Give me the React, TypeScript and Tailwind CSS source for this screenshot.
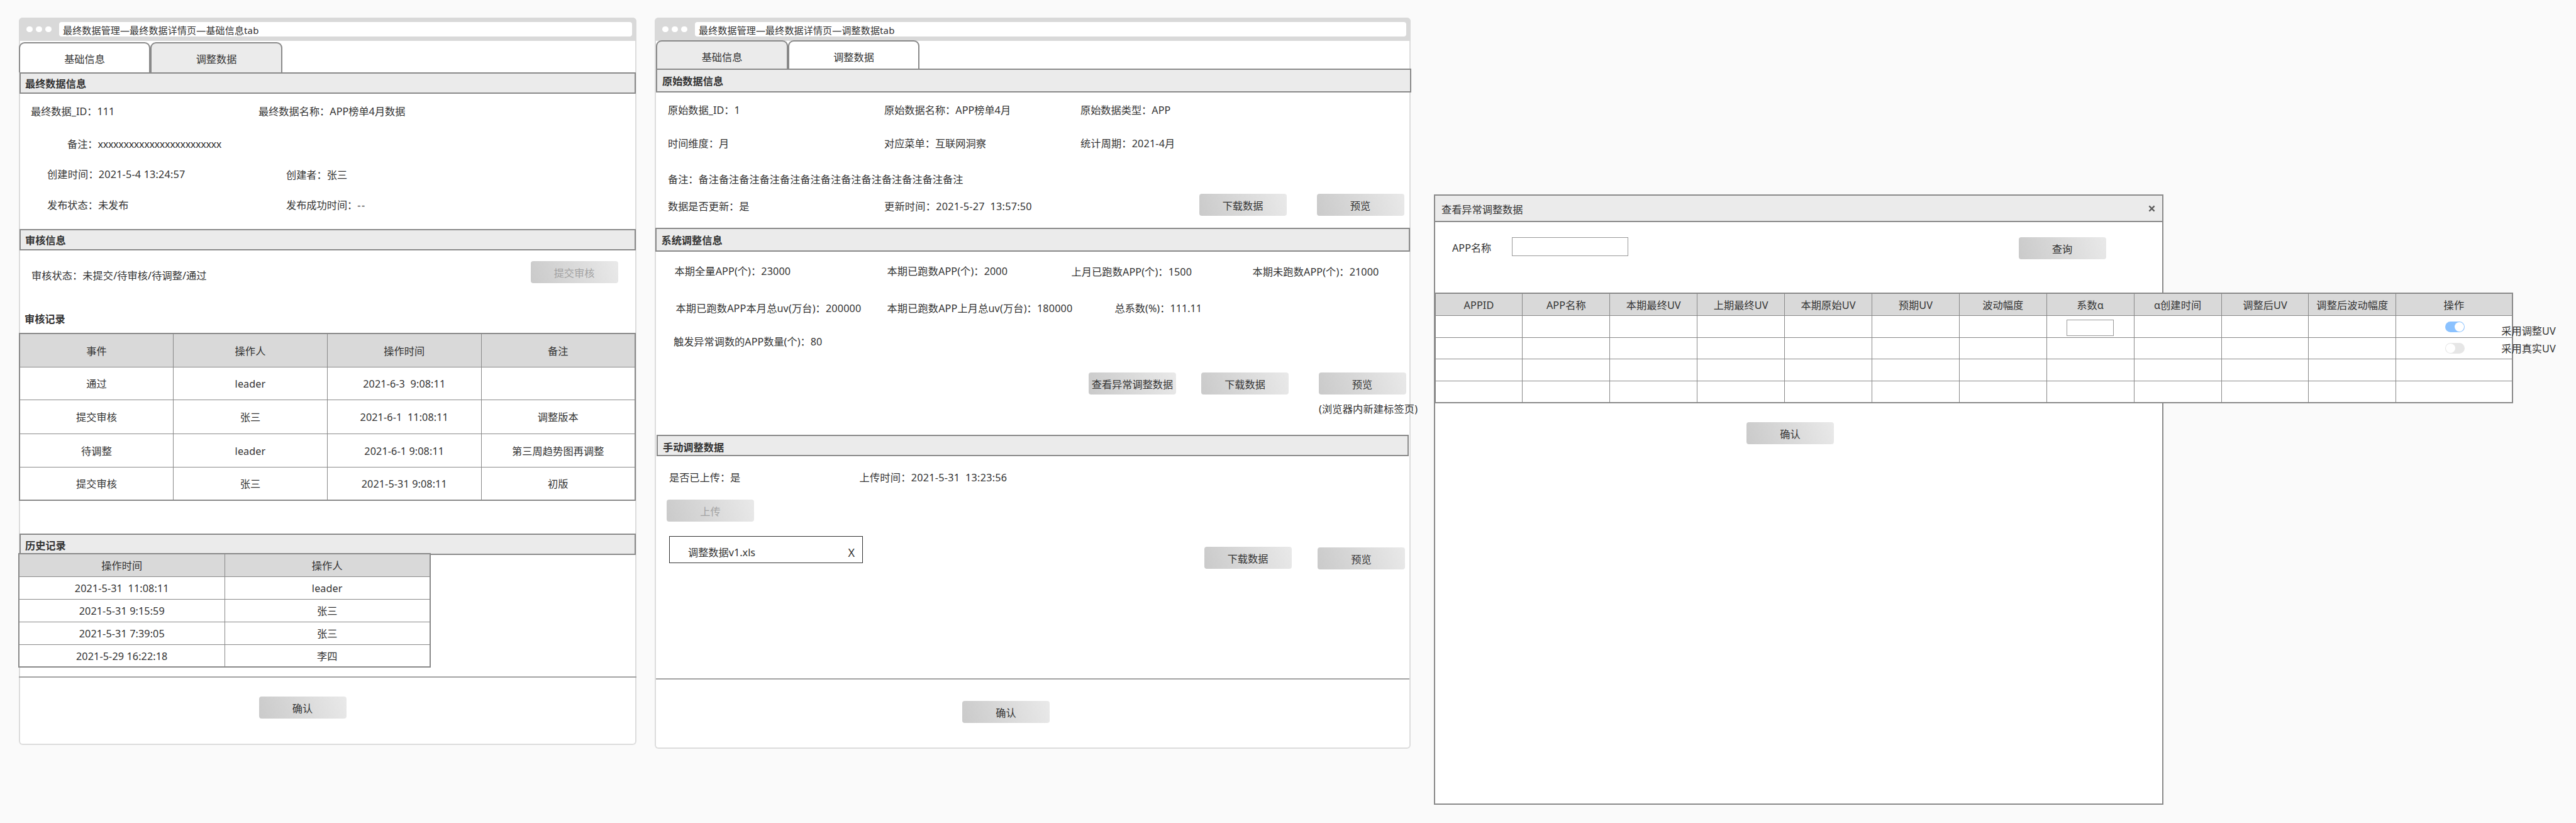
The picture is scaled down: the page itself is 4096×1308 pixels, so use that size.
import type { ReactNode } from "react";

type Kids = { children?: ReactNode; className?: string };

const Text = ({ children, className = "" }: Kids) => (
  <span className={`block whitespace-pre leading-[20px] ${className}`}>{children}</span>
);

const Row = ({ children, className = "" }: Kids) => (
  <div className={`grid shrink-0 items-start ${className}`}>{children}</div>
);

const Button = ({ children, className = "", disabled = false }: Kids & { disabled?: boolean }) => (
  <button
    className={`block w-[139px] shrink-0 rounded-[4px] bg-[linear-gradient(72deg,#cacaca,#e9e9e9)] p-0 pt-[3px] text-center leading-[20px] whitespace-nowrap ${
      disabled ? "text-[#a3a3a3]" : "text-[#333333]"
    } ${className}`}
  >
    {children}
  </button>
);

const SectionHeader = ({ children, className = "" }: Kids) => (
  <h2
    className={`relative flex shrink-0 items-center border-2 border-[#898989] bg-[#ebebeb] pl-[7px] pt-[2px] font-bold leading-[20px] ${className}`}
  >
    {children}
  </h2>
);

const BrowserBar = ({ title }: { title: string }) => (
  <div className="flex h-[37px] shrink-0 items-center rounded-t-[6px] bg-[#d9d9d9] pl-[12px] pr-[7px]">
    <div className="flex w-[52px] gap-[5.5px]">
      <i className="size-[9.5px] rounded-full bg-white" />
      <i className="size-[9.5px] rounded-full bg-white" />
      <i className="size-[9.5px] rounded-full bg-white" />
    </div>
    <div className="flex h-[23px] flex-1 items-center rounded-[4px] bg-white pl-[6px] pt-[3px] text-[15px] leading-[20px] tracking-[0.16px]">
      {title}
    </div>
  </div>
);

const Tab = ({ children, className = "" }: Kids) => (
  <div
    className={`flex items-center justify-center rounded-t-[9px] border-2 border-b-0 border-[#898989] pt-[4px] leading-[20px] ${className}`}
  >
    {children}
  </div>
);

const DataTable = ({
  cols,
  rows,
  heights,
  className = "",
}: {
  cols: string;
  rows: ReactNode[][];
  heights: string[];
  className?: string;
}) => (
  <div className={`relative flex shrink-0 flex-col border-2 border-[#898989] bg-white ${className}`}>
    {rows.map((row, r) => (
      <div
        key={r}
        className={`grid border-[#898989] ${cols} ${heights[r]} ${r === 0 ? "bg-[#d9d9d9]" : ""} ${
          r < rows.length - 1 ? "border-b" : ""
        }`}
      >
        {row.map((cell, c) => (
          <div
            key={c}
            className={`relative flex items-center justify-center whitespace-pre border-[#898989] leading-[20px] ${
              c < row.length - 1 ? "border-r" : ""
            }`}
          >
            {typeof cell === "string" ? <span className="pt-[1px] tracking-[0.1px]">{cell}</span> : cell}
          </div>
        ))}
      </div>
    ))}
  </div>
);

const auditRows = [
  ["事件", "操作人", "操作时间", "备注"],
  ["通过", "leader", "2021-6-3  9:08:11", ""],
  ["提交审核", "张三", "2021-6-1  11:08:11", "调整版本"],
  ["待调整", "leader", "2021-6-1 9:08:11", "第三周趋势图再调整"],
  ["提交审核", "张三", "2021-5-31 9:08:11", "初版"],
];

const historyRows = [
  ["操作时间", "操作人"],
  ["2021-5-31  11:08:11", "leader"],
  ["2021-5-31 9:15:59", "张三"],
  ["2021-5-31 7:39:05", "张三"],
  ["2021-5-29 16:22:18", "李四"],
];

const Toggle = ({ on, className = "" }: { on: boolean; className?: string }) => (
  <div
    className={`absolute left-[78px] flex h-[17px] w-[31px] items-center rounded-full p-[1px] ${
      on ? "justify-end bg-[#8bc2ff]" : "bg-[#e6e6e6]"
    } ${className}`}
  >
    <i className="size-[15px] rounded-full bg-white" />
  </div>
);

const empty = (n: number): ReactNode[] => Array.from({ length: n }, () => "");

const uvRows: ReactNode[][] = [
  [
    "APPID",
    "APP名称",
    "本期最终UV",
    "上期最终UV",
    "本期原始UV",
    "预期UV",
    "波动幅度",
    "系数α",
    "α创建时间",
    "调整后UV",
    "调整后波动幅度",
    "操作",
  ],
  [
    ...empty(7),
    <div key="coef" className="mt-[6px] h-[26px] w-[75px] self-start border border-[#999999] bg-white" />,
    ...empty(3),
    <div key="on">
      <Toggle on className="top-[9px]" />
      <Text className="absolute left-[167px] top-[14px]">采用调整UV</Text>
    </div>,
  ],
  [
    ...empty(11),
    <div key="off">
      <Toggle on={false} className="top-[8px]" />
      <Text className="absolute left-[167px] top-[7px]">采用真实UV</Text>
    </div>,
  ],
  empty(12),
  empty(12),
];

const BasicInfoPanel = () => (
  <section className="mt-[28px] flex h-[1156px] w-[982px] shrink-0 flex-col rounded-[6px] bg-white shadow-[inset_0_0_0_2px_#dcdcdc]">
    <BrowserBar title="最终数据管理—最终数据详情页—基础信息tab" />
    <div className="mt-[2px] flex h-[48px] shrink-0">
      <Tab className="w-[209px] bg-white">基础信息</Tab>
      <Tab className="w-[210px] bg-[#ebebeb]">调整数据</Tab>
    </div>
    <SectionHeader className="ml-[1px] h-[34px] w-[980px]">最终数据信息</SectionHeader>
    <div className="flex h-[215px] shrink-0 flex-col">
      <Row className="mt-[18px] grid-cols-[362px_auto] pl-[19px]">
        <Text>最终数据_ID：111</Text>
        <Text>最终数据名称：APP榜单4月数据</Text>
      </Row>
      <Row className="mt-[32px] pl-[77px]">
        <Text>
          备注：<span className="tracking-[-0.38px]">xxxxxxxxxxxxxxxxxxxxxxxx</span>
        </Text>
      </Row>
      <Row className="mt-[28px] grid-cols-[380px_auto] pl-[45px]">
        <Text className="tracking-[0.18px]">创建时间：2021-5-4 13:24:57</Text>
        <Text className="pt-[1px]">创建者：张三</Text>
      </Row>
      <Row className="mt-[28px] grid-cols-[380px_auto] pl-[45px]">
        <Text>发布状态：未发布</Text>
        <Text>
          发布成功时间：<span className="tracking-[1.6px]">--</span>
        </Text>
      </Row>
    </div>
    <SectionHeader className="ml-[1px] h-[34px] w-[980px]">审核信息</SectionHeader>
    <div className="flex h-[131px] shrink-0 flex-col">
      <Row className="mt-[17px] grid-cols-[793.5px_auto] pl-[20px]">
        <Text className="pt-[13px] tracking-[0.08px]">审核状态：未提交/待审核/待调整/通过</Text>
        <Button disabled className="h-[35px]">提交审核</Button>
      </Row>
      <Text className="mt-[47px] pl-[9px] font-bold">审核记录</Text>
    </div>
    <DataTable
      className="h-[267px] w-[981px]"
      cols="grid-cols-[244px_245px_244.5px_1fr]"
      rows={auditRows}
      heights={["h-[53px]", "h-[52px]", "h-[54px]", "h-[53px]", "h-[51px]"]}
    />
    <SectionHeader className="ml-[1px] mt-[52px] h-[34px] w-[980px] pt-[4px]">历史记录</SectionHeader>
    <DataTable
      className="-ml-[1px] -mt-[3px] h-[182px] w-[656px]"
      cols="grid-cols-[326.5px_1fr]"
      rows={historyRows}
      heights={["h-[36px]", "h-[36px]", "h-[36px]", "h-[36px]", "h-[34px]"]}
    />
    <div className="mt-[14px] h-[2px] w-[982px] shrink-0 bg-[#a3a3a3]" />
    <Button className="ml-[381.5px] mt-[30px] h-[35px]">确认</Button>
  </section>
);

const AdjustDataPanel = () => (
  <section className="ml-[29px] mt-[28px] flex h-[1162px] w-[1202px] shrink-0 flex-col rounded-[6px] bg-white shadow-[inset_0_0_0_2px_#dcdcdc]">
    <BrowserBar title="最终数据管理—最终数据详情页—调整数据tab" />
    <div className="relative -mt-[1px] ml-[2px] flex h-[45px] shrink-0">
      <Tab className="w-[210px] bg-[#ebebeb] pt-[7px]">基础信息</Tab>
      <Tab className="w-[209px] bg-white pt-[7px]">调整数据</Tab>
    </div>
    <SectionHeader className="ml-[2px] h-[38px] w-[1200.5px] pl-[8px] pt-[0px]">原始数据信息</SectionHeader>
    <div className="flex h-[215px] shrink-0 flex-col">
      <Row className="mt-[18px] grid-cols-[344px_312px_auto] pl-[21px]">
        <Text>原始数据_ID：1</Text>
        <Text>原始数据名称：APP榜单4月</Text>
        <Text>原始数据类型：APP</Text>
      </Row>
      <Row className="mt-[33px] grid-cols-[344px_312px_auto] pl-[21px]">
        <Text>时间维度：月</Text>
        <Text>对应菜单：互联网洞察</Text>
        <Text className="tracking-[0.15px]">统计周期：2021-4月</Text>
      </Row>
      <Row className="mt-[37px] pl-[21px]">
        <Text>备注：备注备注备注备注备注备注备注备注备注备注备注备注备注</Text>
      </Row>
      <Row className="mt-[13px] grid-cols-[344px_500.5px_187px_auto] pl-[21px]">
        <Text className="pt-[10px]">数据是否更新：是</Text>
        <Text className="pt-[10px] tracking-[0.25px]">更新时间：2021-5-27  13:57:50</Text>
        <Button className="h-[35px]">下载数据</Button>
        <Button className="h-[35px]">预览</Button>
      </Row>
    </div>
    <SectionHeader className="ml-[0.5px] h-[38px] w-[1200px] pl-[8px]">系统调整信息</SectionHeader>
    <div className="flex h-[291px] shrink-0 flex-col">
      <Row className="mt-[21px] grid-cols-[338px_293px_288px_auto] pl-[31.5px]">
        <Text className="tracking-[0.1px]">本期全量APP(个)：23000</Text>
        <Text className="tracking-[0.1px]">本期已跑数APP(个)：2000</Text>
        <Text className="pt-[1px] tracking-[0.1px]">上月已跑数APP(个)：1500</Text>
        <Text className="pt-[1px] tracking-[0.1px]">本期未跑数APP(个)：21000</Text>
      </Row>
      <Row className="mt-[38px] grid-cols-[336px_362px_auto] pl-[33.5px]">
        <Text className="tracking-[0.14px]">本期已跑数APP本月总uv(万台)：200000</Text>
        <Text className="tracking-[0.14px]">本期已跑数APP上月总uv(万台)：180000</Text>
        <Text>总系数(%)：111.11</Text>
      </Row>
      <Row className="mt-[33px] pl-[30px]">
        <Text>触发异常调数的APP数量(个)：80</Text>
      </Row>
      <Row className="mt-[39px] grid-cols-[179px_186.5px_auto] pl-[690px]">
        <Button className="h-[35px]">查看异常调整数据</Button>
        <Button className="h-[35px]">下载数据</Button>
        <Button className="h-[35px]">预览</Button>
      </Row>
      <Text className="mt-[13px] pl-[1056px] tracking-[0.16px]">(浏览器内新建标签页)</Text>
    </div>
    <SectionHeader className="ml-[3px] h-[34px] w-[1195.5px] pl-[8px] pt-[5px]">手动调整数据</SectionHeader>
    <div className="flex h-[353px] shrink-0 flex-col">
      <Row className="mt-[24px] grid-cols-[302.5px_auto] pl-[23px]">
        <Text>是否已上传：是</Text>
        <Text className="tracking-[0.25px]">上传时间：2021-5-31  13:23:56</Text>
      </Row>
      <Button disabled className="ml-[19px] mt-[25px] h-[35px]">上传</Button>
      <Row className="mt-[23px] grid-cols-[850.5px_180.5px_auto] pl-[23px]">
        <div className="flex h-[43px] w-[308px] items-center justify-between border border-[#333333] bg-white pl-[29px] pr-[12px] pt-[9px]">
          <Text>调整数据v1.xls</Text>
          <Text className="text-[18px]">X</Text>
        </div>
        <Button className="mt-[17px] h-[35px]">下载数据</Button>
        <Button className="mt-[18px] h-[35px]">预览</Button>
      </Row>
    </div>
    <div className="ml-[2px] h-[2px] w-[1198px] shrink-0 bg-[#a3a3a3]" />
    <Button className="ml-[489px] mt-[34px] h-[35px]">确认</Button>
  </section>
);

const AnomalyDialog = () => (
  <section className="relative ml-[37px] mt-[309px] flex h-[970px] w-[1160px] shrink-0 flex-col border-2 border-[#898989] bg-white">
    <header className="flex h-[42px] shrink-0 items-center justify-between border-b-2 border-[#898989] bg-[#ebebeb] pl-[10px] pr-[11px]">
      <Text className="pt-[4px]">查看异常调整数据</Text>
      <svg viewBox="0 0 12 12" className="mt-[1px] size-[11px]" stroke="#5c5c5c" strokeWidth="2.4" fill="none">
        <path d="M1.5 1.5 10.5 10.5M10.5 1.5 1.5 10.5" />
      </svg>
    </header>
    <Row className="mt-[24px] h-[35px] grid-cols-[95px_805.5px_auto] pl-[27px]">
      <Text className="pt-[7px]">APP名称</Text>
      <div className="h-[30px] w-[185px] border border-[#999999] bg-white" />
      <Button className="h-[35px]">查询</Button>
    </Row>
    <DataTable
      className="-ml-[1.5px] mt-[53px] h-[176px] w-[1715px]"
      cols="grid-cols-[repeat(11,138.9px)_1fr]"
      rows={uvRows}
      heights={["h-[35px]", "h-[35px]", "h-[34px]", "h-[35px]", "h-[33px]"]}
    />
    <Button className="ml-[495px] mt-[30px] h-[35px]">确认</Button>
  </section>
);

export default function App() {
  return (
    <main className="flex h-[1308px] w-[4096px] items-start overflow-hidden bg-[#fafafa] pl-[30px] font-['Noto_Sans','Noto_Sans_CJK_SC',sans-serif] text-[16.2px] text-[#333333]">
      <BasicInfoPanel />
      <AdjustDataPanel />
      <AnomalyDialog />
    </main>
  );
}
